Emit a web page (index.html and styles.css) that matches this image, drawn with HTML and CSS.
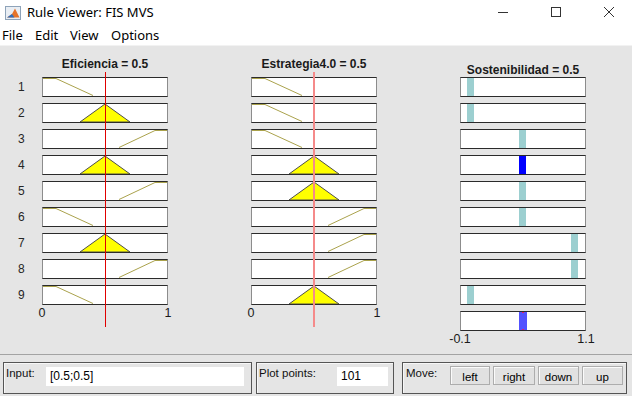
FILE: index.html
```html
<!DOCTYPE html>
<html lang="es">

<head>
    <meta charset="UTF-8">
    <title>Rule Viewer: FIS MVS</title>
    <link rel="stylesheet" href="styles.css">
</head>

<body>
    <!-- barra de título -->
    <div class="titlebar">
        <svg class="app-icon" width="16" height="16" viewBox="0 0 16 16">
            <rect x="0.5" y="1.5" width="15" height="13" fill="#e9eef4" stroke="#8ea3b9" />
            <path d="M2 12.5 L7 9 L10 3.5 L14.5 12.5 Z" fill="#e5732a" />
            <path d="M2 12.5 L7 9 L9.5 12.5 Z" fill="#2d6fbf" />
        </svg>
        <span class="title">Rule Viewer: FIS MVS</span>
        <div class="winbtns">
            <span><svg width="12" height="12" viewBox="0 0 12 12"><path d="M1 6.5 H11" stroke="#333" /></svg></span>
            <span><svg width="12" height="12" viewBox="0 0 12 12"><rect x="1.5" y="1.5" width="9" height="9" fill="none" stroke="#333" /></svg></span>
            <span><svg width="12" height="12" viewBox="0 0 12 12"><path d="M1 1 L11 11 M11 1 L1 11" stroke="#333" /></svg></span>
        </div>
    </div>

    <div class="menubar">
        <span class="m-file">File</span>
        <span class="m-edit">Edit</span>
        <span class="m-view">View</span>
        <span>Options</span>
    </div>

    <div class="viewer">
        <div class="plots">
            <div class="nums">
                <span>1</span><span>2</span><span>3</span><span>4</span><span>5</span>
                <span>6</span><span>7</span><span>8</span><span>9</span>
            </div>

            <!-- Eficiencia -->
            <div class="var">
                <div class="var-title">Eficiencia = 0.5</div>
                <div class="boxes">
                    <div class="box"><svg viewBox="0 0 124 18"><polyline class="mf" points="0,0.5 13,0.5 50,17.5" /></svg></div>
                    <div class="box"><svg viewBox="0 0 124 18"><polygon class="tri" points="37,18 62,0 87,18" /></svg></div>
                    <div class="box"><svg viewBox="0 0 124 18"><polyline class="mf" points="76,17.5 112,0.5 124,0.5" /></svg></div>
                    <div class="box"><svg viewBox="0 0 124 18"><polygon class="tri" points="37,18 62,0 87,18" /></svg></div>
                    <div class="box"><svg viewBox="0 0 124 18"><polyline class="mf" points="76,17.5 112,0.5 124,0.5" /></svg></div>
                    <div class="box"><svg viewBox="0 0 124 18"><polyline class="mf" points="0,0.5 13,0.5 50,17.5" /></svg></div>
                    <div class="box"><svg viewBox="0 0 124 18"><polygon class="tri" points="37,18 62,0 87,18" /></svg></div>
                    <div class="box"><svg viewBox="0 0 124 18"><polyline class="mf" points="76,17.5 112,0.5 124,0.5" /></svg></div>
                    <div class="box"><svg viewBox="0 0 124 18"><polyline class="mf" points="0,0.5 13,0.5 50,17.5" /></svg></div>
                </div>
                <div class="axis"><span>0</span><span>1</span></div>
                <div class="cursor"></div>
            </div>

            <!-- Estrategia4.0 -->
            <div class="var">
                <div class="var-title">Estrategia4.0 = 0.5</div>
                <div class="boxes">
                    <div class="box"><svg viewBox="0 0 124 18"><polyline class="mf" points="0,0.5 13,0.5 50,17.5" /></svg></div>
                    <div class="box"><svg viewBox="0 0 124 18"><polyline class="mf" points="0,0.5 13,0.5 50,17.5" /></svg></div>
                    <div class="box"><svg viewBox="0 0 124 18"><polyline class="mf" points="0,0.5 13,0.5 50,17.5" /></svg></div>
                    <div class="box"><svg viewBox="0 0 124 18"><polygon class="tri" points="37,18 62,0 87,18" /></svg></div>
                    <div class="box"><svg viewBox="0 0 124 18"><polygon class="tri" points="37,18 62,0 87,18" /></svg></div>
                    <div class="box"><svg viewBox="0 0 124 18"><polyline class="mf" points="76,17.5 112,0.5 124,0.5" /></svg></div>
                    <div class="box"><svg viewBox="0 0 124 18"><polyline class="mf" points="76,17.5 112,0.5 124,0.5" /></svg></div>
                    <div class="box"><svg viewBox="0 0 124 18"><polyline class="mf" points="76,17.5 112,0.5 124,0.5" /></svg></div>
                    <div class="box"><svg viewBox="0 0 124 18"><polygon class="tri" points="37,18 62,0 87,18" /></svg></div>
                </div>
                <div class="axis"><span>0</span><span>1</span></div>
                <div class="cursor light"></div>
            </div>

            <!-- Sostenibilidad -->
            <div class="var">
                <div class="var-title out">Sostenibilidad = 0.5</div>
                <div class="boxes">
                    <div class="box"><svg viewBox="0 0 124 18"><rect class="bar" x="6" y="0" width="7" height="18" /></svg></div>
                    <div class="box"><svg viewBox="0 0 124 18"><rect class="bar" x="6" y="0" width="7" height="18" /></svg></div>
                    <div class="box"><svg viewBox="0 0 124 18"><rect class="bar" x="58" y="0" width="7" height="18" /></svg></div>
                    <div class="box"><svg viewBox="0 0 124 18"><rect class="bar strong" x="58" y="0" width="7" height="18" /></svg></div>
                    <div class="box"><svg viewBox="0 0 124 18"><rect class="bar" x="58" y="0" width="7" height="18" /></svg></div>
                    <div class="box"><svg viewBox="0 0 124 18"><rect class="bar" x="58" y="0" width="7" height="18" /></svg></div>
                    <div class="box"><svg viewBox="0 0 124 18"><rect class="bar" x="110" y="0" width="7" height="18" /></svg></div>
                    <div class="box"><svg viewBox="0 0 124 18"><rect class="bar" x="110" y="0" width="7" height="18" /></svg></div>
                    <div class="box"><svg viewBox="0 0 124 18"><rect class="bar" x="6" y="0" width="7" height="18" /></svg></div>
                    <div class="box"><svg viewBox="0 0 124 18">
                            <rect class="bar total" x="58" y="0" width="8" height="18" />
                            <rect class="tick" x="61" y="0" width="2" height="1" />
                            <rect class="tick" x="61" y="17" width="2" height="1" />
                        </svg></div>
                </div>
                <div class="axis"><span>-0.1</span><span>1.1</span></div>
            </div>
        </div>

        <!-- controles inferiores -->
        <div class="controls">
            <div class="panel p-input">
                <label class="lbl-input">Input:</label>
                <div class="field f-input">[0.5;0.5]</div>
            </div>
            <div class="panel p-points">
                <label class="lbl-points">Plot points:</label>
                <div class="field f-points">101</div>
            </div>
            <div class="panel p-move">
                <label class="lbl-move">Move:</label>
                <button class="b-left">left</button>
                <button class="b-right">right</button>
                <button class="b-down">down</button>
                <button class="b-up">up</button>
            </div>
        </div>
    </div>
</body>

</html>
```

FILE: styles.css
```css
:root {
    --fig-bg: #e5e5e5;
    --mf-line: #aaa24c;
    --out-bar: #9ccfd0;
    --ui-font: 'Noto Sans', 'Open Sans', sans-serif;
    --plot-font: 'Liberation Sans', Arial, sans-serif;
}

* {
    margin: 0;
    padding: 0;
    box-sizing: border-box;
}

body {
    width: 632px;
    height: 396px;
    overflow: hidden;
    background: var(--fig-bg);
    font-family: var(--plot-font);
    color: #000;
}

/* barra de título */
.titlebar {
    height: 24px;
    background: #fff;
    display: flex;
    align-items: center;
    padding-left: 5px;
}

.app-icon {
    display: block;
    margin-top: 1px;
}

.title {
    font-family: var(--ui-font);
    font-size: 13px;
    margin-left: 6px;
    color: #000;
}

.winbtns {
    margin-left: auto;
    margin-right: -3px;
    display: flex;
}

.winbtns span {
    width: 53px;
    height: 24px;
    display: flex;
    align-items: center;
    justify-content: center;
}

.winbtns svg {
    display: block;
}

/* menú */
.menubar {
    height: 22px;
    background: #fff;
    display: flex;
    align-items: center;
    padding-left: 2px;
    font-family: var(--ui-font);
    font-size: 13px;
    border-bottom: 1px solid #f2f2f2;
}

.m-file {
    width: 33px;
}

.m-edit {
    width: 35px;
}

.m-view {
    width: 41px;
}

/* zona de gráficos */
.plots {
    height: 308px;
    display: flex;
    padding-top: 11px;
}

.nums {
    width: 42px;
    padding-top: 20px;
    display: flex;
    flex-direction: column;
    gap: 6px;
}

.nums span {
    height: 20px;
    line-height: 20px;
    font-size: 12px;
    color: #262626;
    padding-left: 18px;
}

.var {
    width: 126px;
    position: relative;
    display: flex;
    flex-direction: column;
}

.var+.var {
    margin-left: 83px;
}

.var-title {
    height: 14px;
    line-height: 14px;
    margin-bottom: 6px;
    text-align: center;
    white-space: nowrap;
    font-size: 12px;
    font-weight: bold;
    color: #1a1a1a;
}

.var-title.out {
    margin-top: 6px;
    margin-bottom: 0;
}

.boxes {
    display: flex;
    flex-direction: column;
    gap: 6px;
}

.box {
    height: 20px;
    background: #fff;
    border: 1px solid #2b2b2b;
    border-left-color: #8c8c8c;
    border-right-color: #8c8c8c;
}

.box svg {
    display: block;
    width: 124px;
    height: 18px;
}

.mf {
    fill: none;
    stroke: var(--mf-line);
    stroke-width: 1;
}

.tri {
    fill: #ffff00;
    stroke: #4d4d4d;
    stroke-width: 1;
}

.bar {
    fill: var(--out-bar);
}

.bar.strong {
    fill: #0000ff;
}

.bar.total {
    fill: #5252ff;
}

.tick {
    fill: #e0206a;
}

.axis {
    display: flex;
    justify-content: space-between;
    margin-top: 1px;
    height: 14px;
    line-height: 14px;
    font-size: 12.5px;
    color: #1a1a1a;
}

.axis span {
    width: 0;
    display: flex;
    justify-content: center;
    white-space: nowrap;
}

/* línea del valor de entrada */
.cursor {
    position: absolute;
    left: 63px;
    top: 15px;
    width: 1px;
    height: 255px;
    background: #e00000;
}

.cursor.light {
    left: 62px;
    width: 2px;
    background: #f58a8a;
}

/* controles */
.controls {
    border-top: 1px solid #a3a3a3;
    display: flex;
    padding: 7px 0 0 3px;
    font-size: 11.5px;
}

.panel {
    height: 32px;
    border: 1px solid #555;
    box-shadow: inset 1px 1px 0 #f7f7f7;
    display: flex;
    align-items: flex-start;
    padding: 3px 0 0 2px;
}

.p-input {
    width: 249px;
}

.p-points {
    width: 138px;
    margin-left: 4px;
}

.p-move {
    width: 225px;
    margin-left: 8px;
    padding-left: 3px;
}

label {
    line-height: 14px;
    color: #111;
}

.lbl-input {
    width: 40px;
}

.lbl-points {
    width: 78px;
}

.lbl-move {
    width: 44px;
}

.field {
    margin-top: 1px;
    height: 19px;
    line-height: 19px;
    background: #fff;
    padding-left: 4px;
    font-size: 12px;
}

.f-input {
    width: 198px;
}

.f-points {
    width: 51px;
}

button {
    height: 19px;
    background: #e1e1e1;
    border: 1px solid #adadad;
    box-shadow: inset 1px 1px 0 #fbfbfb;
    font-family: var(--plot-font);
    font-size: 11.5px;
    color: #000;
    padding-top: 2px;
    margin-right: 3px;
}

.b-left {
    width: 40px;
}

.b-right {
    width: 42px;
}

.b-down {
    width: 41px;
}

.b-up {
    width: 41px;
    margin-right: 0;
}
```
